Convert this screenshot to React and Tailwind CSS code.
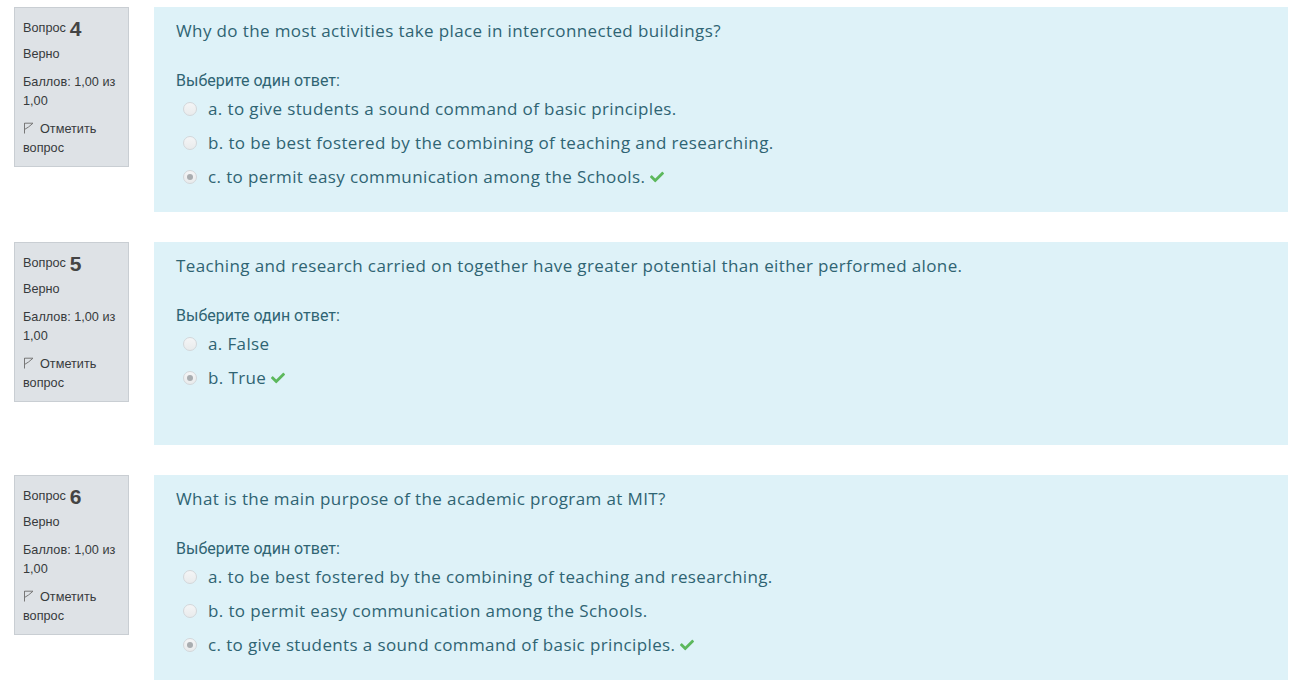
import React from 'react';
import { FaCheck } from 'react-icons/fa';

const questions = [
  {
    no: 4,
    text: 'Why do the most activities take place in interconnected buildings?',
    options: [
      'a. to give students a sound command of basic principles.',
      'b. to be best fostered by the combining of teaching and researching.',
      'c. to permit easy communication among the Schools.',
    ],
    picked: 2,
  },
  {
    no: 5,
    text: 'Teaching and research carried on together have greater potential than either performed alone.',
    options: ['a. False', 'b. True'],
    picked: 1,
    tall: true,
  },
  {
    no: 6,
    text: 'What is the main purpose of the academic program at MIT?',
    options: [
      'a. to be best fostered by the combining of teaching and researching.',
      'b. to permit easy communication among the Schools.',
      'c. to give students a sound command of basic principles.',
    ],
    picked: 2,
  },
];

function Flag() {
  return (
    <svg width="11" height="12" viewBox="0 0 11 12" className="mr-[6px] inline-block align-[-1px]">
      <path d="M1.5 11.5V1 M1.5 1.2 L10 1.2 L5.5 5 L1.5 7.5" fill="none" stroke="#777" strokeWidth="1" />
    </svg>
  );
}

function Radio({ checked }) {
  return (
    <span className="flex h-[14px] w-[14px] items-center justify-center rounded-full border border-[#d3d7da] bg-gradient-to-b from-[#f4f5f6] to-[#e9ebec]">
      {checked && <span className="h-[6px] w-[6px] rounded-full bg-[#a9adb0]" />}
    </span>
  );
}

function Info({ no }) {
  return (
    <div className="h-[160px] w-[115px] shrink-0 border border-[#c9ced3] bg-[#dee2e6] px-[8px] pt-[9px] text-[12.7px] leading-[19.5px] text-[#373a3c] [font-family:'Liberation_Sans',Arial,sans-serif]">
      <div className="mb-[5px] flex h-[23px] items-center">
        Вопрос <span className="ml-[4px] text-[21px] font-bold text-[#444]">{no}</span>
      </div>
      <div className="mb-[8px]">Верно</div>
      <div className="mb-[8px]">Баллов: 1,00 из 1,00</div>
      <div>
        <Flag />
        Отметить вопрос
      </div>
    </div>
  );
}

function Question({ q }) {
  return (
    <div className="mb-[30px] flex">
      <Info no={q.no} />
      <div
        className={`ml-[25px] mr-[15px] flex-1 bg-[#def2f8] pb-[18px] pl-[22px] pt-[12px] text-[#2f6473] ${q.tall ? 'min-h-[203px]' : ''}`}
      >
        <div className="text-[17px] leading-[24px] tracking-[0.38px] [font-family:'Open_Sans',sans-serif]">{q.text}</div>
        <div className="mt-[27px] text-[16px] leading-[22px] [font-family:Roboto,sans-serif]">Выберите один ответ:</div>
        {q.options.map((o, i) => (
          <div key={o} className="flex h-[34px] items-center pl-[7px] text-[17px] tracking-[0.38px] [font-family:'Open_Sans',sans-serif]">
            <Radio checked={i === q.picked} />
            <span className="ml-[11px]">{o}</span>
            {i === q.picked && <FaCheck className="ml-[5px] text-[14px] text-[#5cb85c]" />}
          </div>
        ))}
      </div>
    </div>
  );
}

export default function App() {
  return (
    <div className="min-h-screen bg-white pl-[14px] pt-[7px]">
      {questions.map((q) => (
        <Question key={q.no} q={q} />
      ))}
    </div>
  );
}
